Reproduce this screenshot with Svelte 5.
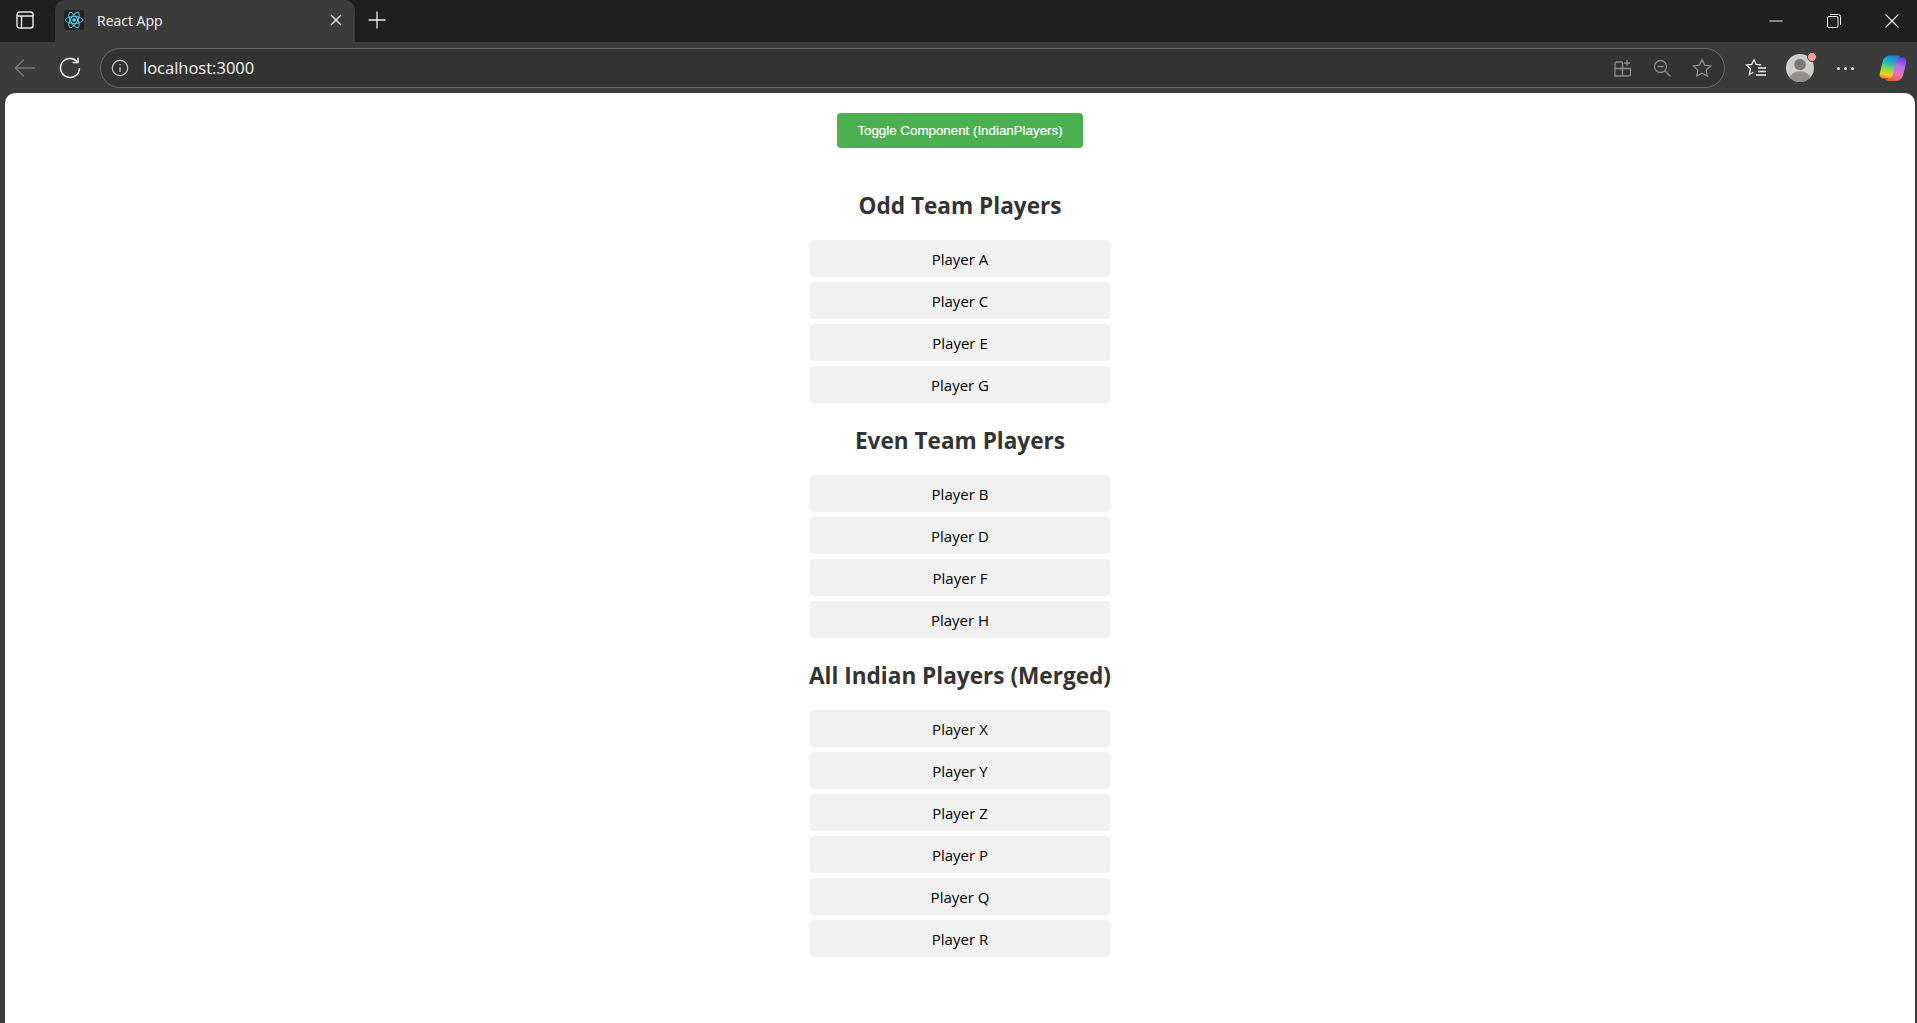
<script>
  const teams = [
    { title: 'Odd Team Players', players: ['Player A', 'Player C', 'Player E', 'Player G'] },
    { title: 'Even Team Players', players: ['Player B', 'Player D', 'Player F', 'Player H'] },
    { title: 'All Indian Players (Merged)', players: ['Player X', 'Player Y', 'Player Z', 'Player P', 'Player Q', 'Player R'] }
  ]
</script>

<div class="browser">
  <div class="tabstrip">
    <div class="sidebtn">
      <svg width="18" height="18" viewBox="0 0 18 18" fill="none" stroke="#e8e8e8" stroke-width="1.4">
        <rect x="1" y="1" width="16" height="16" rx="2.5" />
        <path d="M1 5h16M5.5 5v12" />
      </svg>
    </div>
    <div class="tab">
      <span class="favicon">
        <svg width="20" height="20" viewBox="-11 -11 22 22" fill="none" stroke="#61dafb" stroke-width="1">
          <circle r="1.9" fill="#61dafb" stroke="none" />
          <ellipse rx="9.5" ry="3.8" />
          <ellipse rx="9.5" ry="3.8" transform="rotate(60)" />
          <ellipse rx="9.5" ry="3.8" transform="rotate(120)" />
        </svg>
      </span>
      <span class="tabtitle">React App</span>
      <svg class="tabclose" width="12" height="12" viewBox="0 0 12 12" stroke="#f0f0f0" stroke-width="1.4">
        <path d="M1 1l10 10M11 1L1 11" />
      </svg>
    </div>
    <div class="newtab">
      <svg width="18" height="18" viewBox="0 0 18 18" stroke="#eee" stroke-width="1.3">
        <path d="M9 0.5v17M0.5 9h17" />
      </svg>
    </div>
    <div class="spacer"></div>
    <div class="winbtns">
      <svg width="14" height="14" viewBox="0 0 14 14" stroke="#eee" stroke-width="1">
        <path d="M0.5 7h13" />
      </svg>
      <svg width="14" height="14" viewBox="0 0 14 14" fill="none" stroke="#eee" stroke-width="1">
        <rect x="0.5" y="2.5" width="10.5" height="11" rx="1.5" />
        <path d="M3 0.5h8.5a2 2 0 0 1 2 2v8.5" />
      </svg>
      <svg width="14" height="14" viewBox="0 0 14 14" stroke="#eee" stroke-width="1.1">
        <path d="M0.5 0.5l13 13M13.5 0.5l-13 13" />
      </svg>
    </div>
  </div>

  <div class="toolbar">
    <svg class="back" width="22" height="20" viewBox="0 0 22 20" fill="none" stroke="#7a7a7a" stroke-width="1.3">
      <path d="M21 10H1.5M10 1.5L1.5 10l8.500 8.500" />
    </svg>
    <svg class="reload" width="22" height="22" viewBox="0 0 22 22" fill="none" stroke="#f0f0f0" stroke-width="1.5">
      <path d="M18 4.500A9.500 9.500 0 1 0 20.500 11" />
      <path d="M19 0.500v5h-5.500" />
    </svg>
    <div class="address">
      <svg width="18" height="18" viewBox="0 0 18 18" fill="none" stroke="#c8c8c8" stroke-width="1.2">
        <circle cx="9" cy="9" r="7.700" />
        <path d="M9 8v5M9 5v1.500" />
      </svg>
      <span class="url">localhost:3000</span>
      <div class="spacer"></div>
      <svg width="18" height="18" viewBox="0 0 18 18" fill="none" stroke="#8c8c8c" stroke-width="1.300">
        <path d="M8.500 3H2.500a1.500 1.500 0 0 0-1.500 1.500V17h14a1.500 1.500 0 0 0 1.500-1.500V9.500H1M8.500 3v14M13 1v6M10 4h6" />
      </svg>
      <svg width="18" height="18" viewBox="0 0 18 18" fill="none" stroke="#8c8c8c" stroke-width="1.300">
        <circle cx="7.500" cy="7.500" r="6" />
        <path d="M4.500 7.500h6M12 12l5.500 5.500" />
      </svg>
      <svg width="20" height="20" viewBox="0 0 20 20" fill="none" stroke="#8c8c8c" stroke-width="1.300">
        <path d="M10 1.500l2.600 5.600 6 .8-4.400 4.200 1.100 6L10 15.200l-5.300 2.900 1.100-6L1.400 7.900l6-.8z" />
      </svg>
    </div>
    <svg class="favs" width="22" height="20" viewBox="0 0 22 20" fill="none" stroke="#f0f0f0" stroke-width="1.300">
      <path d="M9 1.500l2.200 4.800 5 .6M9 1.500L6.800 6.300l-5.300.7 3.900 3.700-1 5.800 4-2.300" />
      <path d="M13 10h8M13 13.500h8M11 17h10" />
    </svg>
    <span class="avatar">
      <svg width="28" height="28" viewBox="0 0 28 28">
        <circle cx="14" cy="14" r="14" fill="#cfcdca" />
        <circle cx="14" cy="10.500" r="5.800" fill="#7d7a77" />
        <path d="M3.500 23.500c2-4.500 6-6 10.500-6s8.500 1.500 10.500 6A14 14 0 0 1 14 28a14 14 0 0 1-10.500-4.500z" fill="#94918d" />
      </svg>
      <span class="badge"></span>
    </span>
    <span class="dots"><i></i><i></i><i></i></span>
    <svg class="copilot" width="28" height="26" viewBox="0 0 28 26">
      <defs>
        <linearGradient id="cpa" x1="0.500" y1="0" x2="0.300" y2="1">
          <stop offset="0" stop-color="#1583e6" />
          <stop offset="0.350" stop-color="#2cc0b0" />
          <stop offset="0.650" stop-color="#a8d83a" />
          <stop offset="0.850" stop-color="#f7d21f" />
          <stop offset="1" stop-color="#f2762c" />
        </linearGradient>
        <linearGradient id="cpb" x1="0.700" y1="0" x2="0.400" y2="1">
          <stop offset="0" stop-color="#6a3fe0" />
          <stop offset="0.350" stop-color="#b56ae8" />
          <stop offset="0.700" stop-color="#ee74b8" />
          <stop offset="1" stop-color="#f4552c" />
        </linearGradient>
      </defs>
      <path d="M17 26h-7c-2 0-3-.8-3.500-2 2.500.5 4-1 4.700-3.500L14 7c.6-3 2.500-4.500 5-4.500h4c3 0 4.800 2 4.200 5L24.500 19c-1 4-3.500 7-7.500 7z" fill="url(#cpb)" />
      <path d="M11 .5h7c2 0 3 .8 3.500 2-2.500-.5-4 1-4.700 3.500L14 19c-.6 3-2.500 4.500-5 4.500H5c-3 0-4.800-2-4.200-5L3.500 7C4.500 3 7 .5 11 .5z" fill="url(#cpa)" />
    </svg>
  </div>

  <div class="page">
    <button class="toggle">Toggle Component (IndianPlayers)</button>
    {#each teams as team}
      <h2>{team.title}</h2>
      <ul>
        {#each team.players as player}
          <li>{player}</li>
        {/each}
      </ul>
    {/each}
  </div>
</div>

<style>
  :global(body) {
    margin: 0;
    background: #3b3b3b;
    overflow: hidden;
  }

  .browser {
    display: flex;
    flex-direction: column;
    height: 1023px;
    font-family: 'Open Sans', 'Noto Sans', sans-serif;
  }

  .tabstrip {
    display: flex;
    align-items: flex-end;
    height: 42px;
    background: #1f1f1f;
    box-sizing: border-box;
  }

  .sidebtn {
    width: 55px;
    height: 42px;
    display: flex;
    align-items: center;
    padding: 0 0 2px 16px;
    box-sizing: border-box;
  }

  .tab {
    display: flex;
    align-items: center;
    width: 300px;
    height: 42px;
    box-sizing: border-box;
    padding: 0 13px 2px 9px;
    background: #3b3b3b;
    border-radius: 10px 10px 0 0;
    color: #f5f5f5;
  }

  .favicon {
    display: flex;
    align-items: center;
    justify-content: center;
    width: 20px;
    height: 20px;
    background: #222;
    border-radius: 2px;
  }

  .tabtitle {
    margin-left: 13px;
    font-size: 14px;
    flex: 1;
  }

  .newtab {
    height: 42px;
    box-sizing: border-box;
    display: flex;
    align-items: center;
    padding: 0 0 2px 13px;
  }

  .spacer {
    flex: 1;
  }

  .winbtns {
    display: flex;
    align-items: center;
    gap: 44px;
    height: 42px;
    box-sizing: border-box;
    padding: 0 18px 1px 0;
  }

  .toolbar {
    display: flex;
    align-items: center;
    height: 51px;
    background: #3b3b3b;
    box-sizing: border-box;
    padding-top: 1px;
  }

  .back {
    margin-left: 14px;
  }

  .reload {
    margin-left: 23px;
  }

  .address {
    display: flex;
    align-items: center;
    gap: 21px;
    width: 1625px;
    height: 40px;
    margin-left: 19px;
    padding: 0 12px 0 10px;
    box-sizing: border-box;
    background: #333;
    border: 1px solid #6b6b6b;
    border-radius: 20px;
  }

  .url {
    margin-left: -7px;
    padding-bottom: 2px;
    color: #f5f5f5;
    font-size: 16.5px;
  }

  .favs {
    margin-left: 20px;
  }

  .avatar {
    position: relative;
    display: flex;
    margin-left: 19px;
  }

  .badge {
    position: absolute;
    top: -2px;
    right: -3px;
    width: 8px;
    height: 8px;
    background: #f4a0a0;
    border: 1px solid #3b3b3b;
    border-radius: 50%;
  }

  .dots {
    display: flex;
    gap: 4px;
    margin-left: 23px;
  }

  .dots i {
    width: 3px;
    height: 3px;
    background: #eee;
    border-radius: 50%;
  }

  .copilot {
    margin-left: 25px;
  }

  .page {
    flex: 1;
    display: flex;
    flex-direction: column;
    align-items: center;
    margin: 0 2px 0 5px;
    padding-top: 20px;
    background: #fff;
    border-radius: 10px 10px 0 0;
  }

  .toggle {
    width: 246px;
    height: 35px;
    margin-bottom: 20px;
    padding: 0;
    border: none;
    border-radius: 4px;
    background: #4caf50;
    color: #fff;
    font-family: 'Liberation Sans', Arial, sans-serif;
    font-size: 13.33px;
    font-weight: 400;
    -webkit-text-stroke: 0.2px #fff;
  }

  h2 {
    margin: 21px 0 17px;
    color: #333;
    font-size: 22.6px;
    line-height: 34px;
    font-weight: 700;
    white-space: nowrap;
  }

  ul {
    display: flex;
    flex-direction: column;
    gap: 5px;
    width: 300px;
    margin: 0;
    padding: 0;
    list-style: none;
  }

  li {
    height: 37px;
    line-height: 39px;
    text-align: center;
    font-size: 15px;
    color: #000;
    background: #f1f1f1;
    border-radius: 4px;
  }
</style>
